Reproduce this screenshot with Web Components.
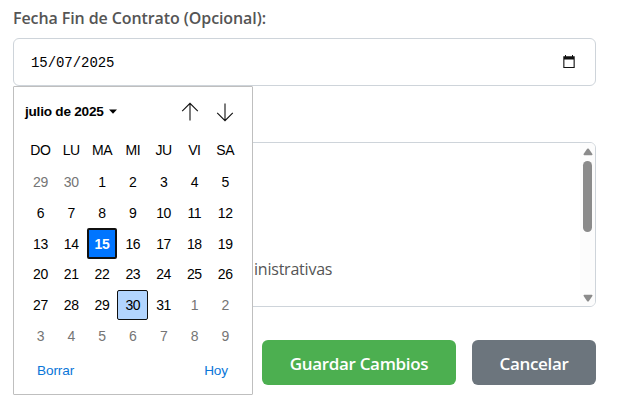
<!DOCTYPE html>
<html lang="es">
<head>
<meta charset="utf-8">
<title>Contrato</title>
<style>
html,body{margin:0;background:#fff;overflow:hidden}
body{width:621px;height:413px;font-family:"Open Sans","Noto Sans",sans-serif}
</style>
</head>
<body>
<contract-form></contract-form>
<script>
const define = (name, html, init) => customElements.define(name, class extends HTMLElement {
  constructor() {
    super();
    this.attachShadow({ mode: 'open' }).innerHTML = html;
    if (init) init(this, this.shadowRoot);
  }
});

define('date-field', `
<style>
:host{display:flex;box-sizing:border-box;height:48px;border:1px solid #ced4da;border-radius:6px;align-items:center;justify-content:space-between;padding:0 19px 0 17px;background:#fff}
span{font:14px/20px "Liberation Mono",monospace;letter-spacing:-.06px;color:#000;padding-top:2px}
svg{display:block;width:14px;height:14px}
</style>
<span><slot></slot></span>
<svg viewBox="0 0 14 14"><path fill="#111" fill-rule="evenodd" d="M3 0h1v1.300h6V0h1v1.300h1.700V13H1.300V1.300H3zM2.400 4.500v7.400h9.200V4.500z"/></svg>`);

define('option-list', `
<style>
:host{display:flex;box-sizing:border-box;height:165px;border:1px solid #ced4da;border-radius:6px;background:#fff;overflow:hidden;justify-content:space-between}
.items{padding:115px 0 0 240px;font-size:16px;line-height:22px;color:#555;letter-spacing:-.22px}
.bar{width:15px;background:#fcfcfc;display:flex;flex-direction:column;align-items:center;padding:5px 0 4px;box-sizing:border-box}
.thumb{width:9px;height:71px;border-radius:5px;background:#8b8b8b;margin-top:5px;margin-bottom:auto}
svg{display:block;width:10px;height:8px;fill:#8b8b8b}
</style>
<div class="items"><slot></slot></div>
<div class="bar"><svg viewBox="0 0 10 8"><path d="M4.200.8Q5 0 5.800.8L9.400 6q.5 1.200-.8 1.200H1.400Q.1 7.200.6 6z"/></svg><div class="thumb"></div><svg viewBox="0 0 10 8"><path d="M4.200 7.200Q5 8 5.800 7.200L9.400 2q.5-1.200-.8-1.200H1.400Q.1.8.6 2z"/></svg></div>`);

define('action-button', `
<style>
:host{display:flex;height:45px;border-radius:6px;background:var(--fill);color:#fff;align-items:center;justify-content:center;font-size:17px;font-weight:600;white-space:nowrap}
span{padding-top:1px}
</style><span><slot></slot></span>`);

define('calendar-popup', `
<style>
:host{display:flex;flex-direction:column;box-sizing:border-box;width:240px;height:309px;border:1px solid #bfbfbf;border-radius:1px;background:#fff;font:14px/16px "Liberation Sans",sans-serif;letter-spacing:-.4px;color:#000}
header{display:flex;height:49px;align-items:center;padding:0 18px 0 11px}
b{font-size:13.6px;letter-spacing:-.23px;white-space:nowrap}
.caret{width:8px;height:5px;margin-left:5px}
.arrows{display:flex;gap:17px;margin-left:auto;padding-top:1px}
.arrows svg{width:18px;height:20px;fill:none;stroke:#111;stroke-width:1.100}
svg{display:block}
.grid{display:grid;grid-template-columns:repeat(7,30.8px);grid-template-rows:31px repeat(6,30.7px);margin-left:11px}
.grid span{display:flex;align-items:center;justify-content:center;box-sizing:border-box}
.grid .weekday{padding-bottom:3px}
.out{color:#757575}
.grid .sel{background:#0075ff;color:#fff;border:2px solid #101010;border-radius:2px;font-weight:700}
.grid .now{background:#b2d5ff;border:1px solid #101010;border-radius:2px}
footer{display:flex;justify-content:space-between;padding:12px 24px 0 23px;color:#0a76d8;font-size:13.6px;letter-spacing:-.1px}
</style>
<header><b><slot></slot></b><svg class="caret" viewBox="0 0 8 5"><path d="M0 .5h8L4 4.700z"/></svg>
<div class="arrows"><svg viewBox="0 0 18 20"><path d="M9 18.500V1.500M1.200 9.200 9 1.400l7.800 7.800"/></svg><svg viewBox="0 0 18 20"><path d="M9 1.500v17M1.200 10.800 9 18.600l7.800-7.800"/></svg></div></header>
<div class="grid"></div>
<footer><span>Borrar</span><span>Hoy</span></footer>`, (host, root) => {
  const grid = root.querySelector('.grid');
  const add = (text, cls) => {
    const s = document.createElement('span');
    s.textContent = text;
    if (cls) s.className = cls;
    grid.append(s);
  };
  ['DO','LU','MA','MI','JU','VI','SA'].forEach(d => add(d, 'weekday'));
  for (let i = -1; i <= 40; i++) {
    const day = i < 1 ? i + 30 : i > 31 ? i - 31 : i;
    add(day, i < 1 || i > 31 ? 'out' : i === 15 ? 'sel' : i === 30 ? 'now' : '');
  }
});

define('contract-form', `
<style>
:host{display:block;position:relative;width:583px;padding:7px 0 0 13px;height:406px}
label{display:block;height:31px;line-height:22px;font-size:16px;font-weight:600;color:#555;letter-spacing:-.09px;white-space:nowrap}
option-list{margin-top:56px}
.actions{display:flex;justify-content:flex-end;gap:16px;margin-top:33px}
.save{width:194px;--fill:#4caf50;letter-spacing:-.33px}
.cancel{width:124px;--fill:#6c757d;letter-spacing:-.33px}
calendar-popup{position:absolute;left:13px;top:86px}
</style>
<label><span>Fecha Fin de Contrato (Opcional):</span></label>
<date-field>15/07/2025</date-field>
<option-list>inistrativas</option-list>
<div class="actions"><action-button class="save">Guardar Cambios</action-button><action-button class="cancel">Cancelar</action-button></div>
<calendar-popup>julio de 2025</calendar-popup>`);
</script>
</body>
</html>
